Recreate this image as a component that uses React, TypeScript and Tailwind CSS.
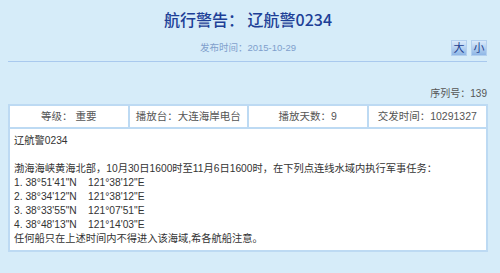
import React from "react";

const body = { fontFamily: '"Liberation Sans", "Noto Sans CJK SC", sans-serif' };

export default function App() {
  const coords = [
    ["1. 38°51'41\"N", "121°38'12\"E"],
    ["2. 38°34'12\"N", "121°38'12\"E"],
    ["3. 38°33'55\"N", "121°07'51\"E"],
    ["4. 38°48'13\"N", "121°14'03\"E"],
  ];
  return (
    <div className="w-[500px] h-[273px] bg-[#d6ecf9] overflow-hidden" style={body}>
      <div className="ml-[8px] w-[480px] pt-[8px]">
        <div
          className="text-center text-[16px] leading-[22px] font-medium text-[#1d3f97]"
          style={{ fontFamily: '"Noto Sans CJK SC", sans-serif' }}
        >
          航行警告： 辽航警0234
        </div>
        <div className="mt-[10px] h-[16px] grid grid-cols-[1fr_auto_1fr] items-center">
          <div />
          <div className="text-[9.5px] leading-[16px] text-[#7f9fcc]">发布时间：2015-10-29</div>
          <div className="flex justify-end gap-[4px] pr-[1px]">
            <div className="w-[16px] h-[16px] flex items-center justify-center text-[11px] leading-none text-[#1f3f8f] border border-[#b3d0ef] bg-gradient-to-b from-[#dbeafa] to-[#8fb7e6]">
              大
            </div>
            <div className="w-[16px] h-[16px] flex items-center justify-center text-[11px] leading-none text-[#1f3f8f] border border-[#b3d0ef] bg-gradient-to-b from-[#dbeafa] to-[#8fb7e6]">
              小
            </div>
          </div>
        </div>
        <div className="mt-[5px] mr-[1px] border-b border-[#a9c9ee]" />
        <div className="mt-[25px] text-right pr-[1px] text-[10px] leading-[14px] text-[#555]">序列号：139</div>
        <div className="mt-[3px] grid grid-cols-4 border-t-2 border-l-2 border-[#bddaf3] bg-white">
          {["等级： 重要", "播放台：大连海岸电台", "播放天数：9", "交发时间：10291327"].map((t) => (
            <div
              key={t}
              className="h-[23px] flex items-center justify-center border-r-2 border-b-2 border-[#bddaf3] text-[10.5px] text-[#555]"
            >
              {t}
            </div>
          ))}
        </div>
        <div className="border-l-2 border-r-2 border-b-2 border-[#bddaf3] bg-white pl-[4px] pt-[5px] pb-[4px] text-[10.25px] leading-[14px] text-[#333]">
          <div>辽航警0234</div>
          <div>&nbsp;</div>
          <div>渤海海峡黄海北部，10月30日1600时至11月6日1600时，在下列点连线水域内执行军事任务：</div>
          {coords.map(([a, b]) => (
            <div key={a} className="whitespace-pre">
              {a}
              {"    "}
              {b}
            </div>
          ))}
          <div>任何船只在上述时间内不得进入该海域,希各航船注意。</div>
        </div>
      </div>
    </div>
  );
}
